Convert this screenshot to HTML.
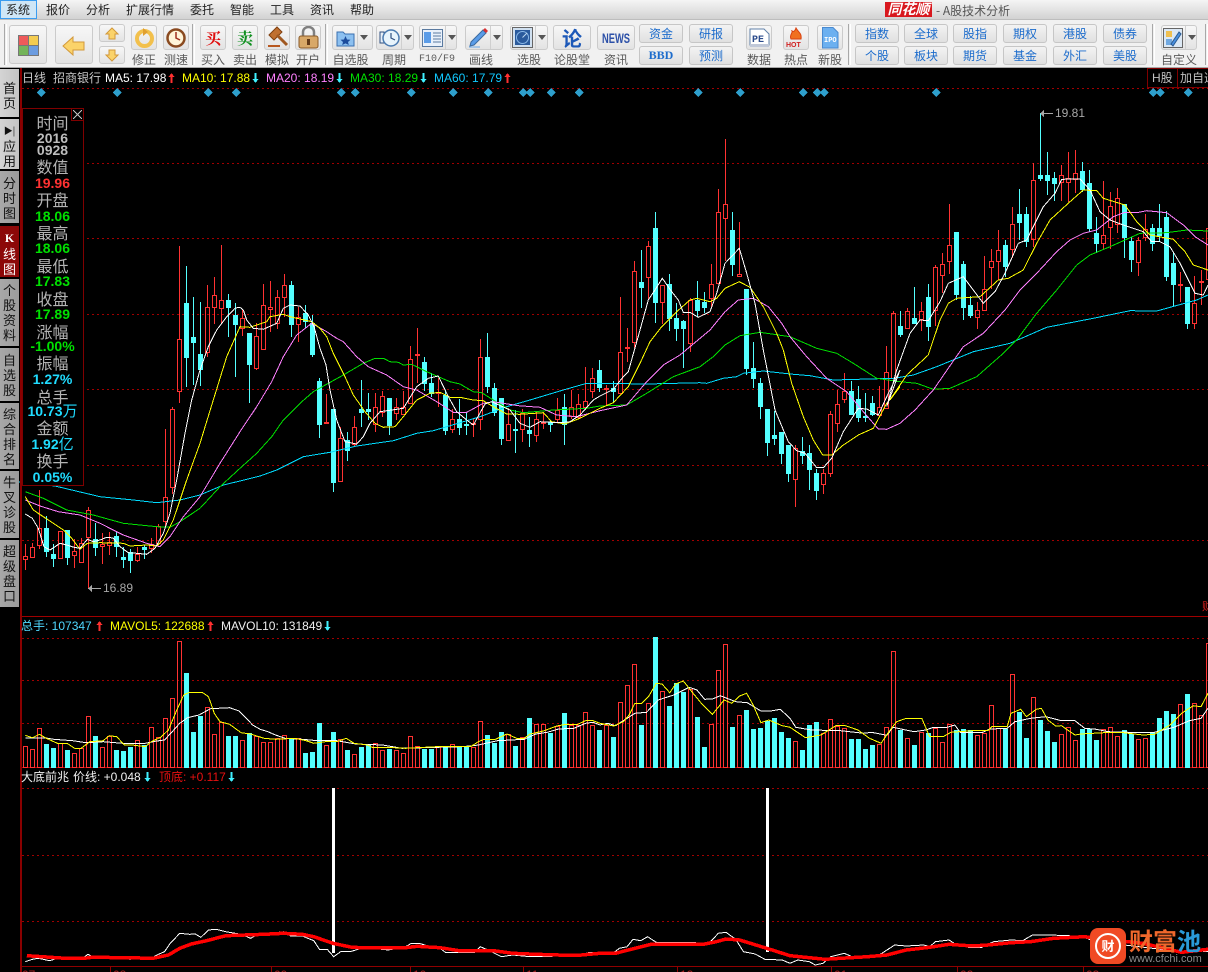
<!DOCTYPE html>
<html lang="zh-CN">
<head>
<meta charset="utf-8">
<title>A股技术分析</title>
<style>
html,body{margin:0;padding:0;background:#000}
#p{position:relative;width:1208px;height:972px;overflow:hidden;background:#000;font-family:"Liberation Sans","WenQuanYi Zen Hei","Noto Sans CJK SC",sans-serif;font-size:12px}
#p div,#p span{position:absolute;white-space:nowrap;box-sizing:border-box}
#p span span{position:static}
.menu{top:3px;color:#222;font-size:12px;line-height:14px;font-family:"WenQuanYi Zen Hei","Noto Sans CJK SC",sans-serif}
.b{border:1px solid #cbcbcb;border-radius:3px;background:linear-gradient(#f7f7f7,#e3e3e3)}
.g{height:19px;border:1px solid #c6c6c6;border-radius:3px;background:linear-gradient(#f3f3f3,#e0e0e0);color:#1c6ccc;text-align:center;line-height:17px;font-size:12px;font-family:"WenQuanYi Zen Hei","Noto Sans CJK SC",sans-serif}
.l{top:53px;color:#5a5a5a;font-size:12px;line-height:14px;font-family:"WenQuanYi Zen Hei","Noto Sans CJK SC",sans-serif;text-align:center}
.s{top:24px;width:3px;height:41px;border-left:1px solid #a8a8a8;border-right:1px solid #fff}
.tab{left:0;width:19px;background:linear-gradient(90deg,#a8a8a8,#9c9c9c);color:#111;font-size:13px;line-height:15px;text-align:center;font-family:"WenQuanYi Zen Hei","Noto Sans CJK SC",sans-serif;white-space:normal!important}
.lab{left:22px;width:61px;text-align:center;color:#b4b4b4;font-size:16px;line-height:16px;font-family:"WenQuanYi Zen Hei","Noto Sans CJK SC",sans-serif}
.val{left:22px;width:61px;text-align:center;font-weight:bold;font-size:14px;line-height:14px}
.t{font-size:12px;line-height:14px}
svg{position:absolute;display:block}
</style>
</head>
<body>
<div id="p">
<!-- menu bar -->
<div style="left:0;top:0;width:1208px;height:20px;background:linear-gradient(#f5f5f5,#d2d2d2);border-bottom:1px solid #bdbdbd"></div>
<div style="left:0;top:0;width:37px;height:19px;background:#cfe6f6;border:1px solid #3a9cf0"></div>
<div class="menu" style="left:6px">系统</div>
<div class="menu" style="left:46px">报价</div>
<div class="menu" style="left:86px">分析</div>
<div class="menu" style="left:126px">扩展行情</div>
<div class="menu" style="left:190px">委托</div>
<div class="menu" style="left:230px">智能</div>
<div class="menu" style="left:270px">工具</div>
<div class="menu" style="left:310px">资讯</div>
<div class="menu" style="left:350px">帮助</div>
<div style="left:885px;top:2px;width:47px;height:15px;background:#d8181e;color:#fff;font:italic bold 14px/15px 'Noto Sans CJK SC',sans-serif;text-align:center">同花顺</div>
<div class="t" style="left:936px;top:4px;color:#555;font-family:'WenQuanYi Zen Hei','Noto Sans CJK SC',sans-serif">- A股技术分析</div>

<!-- toolbar -->
<div style="left:0;top:20px;width:1208px;height:48px;background:#f1f1f1;border-bottom:1px solid #a8a8a8"></div>
<div class="s" style="left:4px"></div>
<div class="b" style="left:9px;top:25px;width:38px;height:39px"></div>
<svg style="left:18px;top:35px" width="22" height="22"><rect x="0" y="0" width="21" height="21" fill="#777"/><rect x="1" y="1" width="9" height="9" fill="#ee5a5a"/><rect x="11" y="1" width="9" height="9" fill="#f4cc50"/><rect x="1" y="11" width="9" height="9" fill="#74b45a"/><rect x="11" y="11" width="9" height="9" fill="#6c9ce0"/></svg>
<div class="b" style="left:55px;top:25px;width:38px;height:39px"></div>
<svg style="left:62px;top:36px" width="24" height="20"><path d="M1 10 L11 1 V6 H22 V14 H11 V19Z" fill="#fbd36a" stroke="#d2983a"/></svg>
<div class="b" style="left:99px;top:24px;width:26px;height:18px"></div>
<svg style="left:104px;top:27px" width="16" height="13"><path d="M8 1 L14 7 H11 V12 H5 V7 H2Z" fill="#fbd36a" stroke="#d2983a"/></svg>
<div class="b" style="left:99px;top:46px;width:26px;height:18px"></div>
<svg style="left:104px;top:49px" width="16" height="13"><path d="M8 12 L14 6 H11 V1 H5 V6 H2Z" fill="#fbd36a" stroke="#d2983a"/></svg>
<div class="b" style="left:131px;top:25px;width:26px;height:25px"></div>
<svg style="left:134px;top:28px" width="21" height="21"><circle cx="10.5" cy="10.5" r="7.5" fill="none" stroke="#f2c04c" stroke-width="4"/><path d="M9 0 L14 4 L9 8Z" fill="#e0a030"/></svg>
<div class="l" style="left:131px;width:26px">修正</div>
<div class="b" style="left:163px;top:25px;width:26px;height:25px"></div>
<svg style="left:166px;top:28px" width="20" height="20"><circle cx="10" cy="10" r="8.5" fill="#fff4d8" stroke="#8a4a20" stroke-width="2.5"/><path d="M10 4 V10 L14 12" fill="none" stroke="#a03020" stroke-width="1.5"/></svg>
<div class="l" style="left:163px;width:26px">测速</div>
<div class="s" style="left:192px"></div>

<div class="b" style="left:200px;top:25px;width:26px;height:25px;text-align:center;color:#e01010;font:16px/23px 'Noto Serif CJK SC',serif;font-weight:bold">买</div>
<div class="l" style="left:200px;width:26px">买入</div>
<div class="b" style="left:232px;top:25px;width:26px;height:25px;text-align:center;color:#109020;font:16px/23px 'Noto Serif CJK SC',serif;font-weight:bold">卖</div>
<div class="l" style="left:232px;width:26px">卖出</div>
<div class="b" style="left:264px;top:25px;width:26px;height:25px"></div>
<svg style="left:266px;top:26px" width="23" height="23"><path d="M3 9 L11 1 L16 6 L8 14Z" fill="#c07030" stroke="#804010"/><path d="M11 9 L21 19" stroke="#a05820" stroke-width="3"/><rect x="2" y="19" width="12" height="2" fill="#b85820"/></svg>
<div class="l" style="left:264px;width:26px">模拟</div>
<div class="b" style="left:295px;top:25px;width:26px;height:25px"></div>
<svg style="left:298px;top:26px" width="21" height="23"><path d="M5 11 V6 A5.5 5 0 0 1 16 6 V11" fill="none" stroke="#808080" stroke-width="2.5"/><rect x="1" y="10" width="19" height="12" rx="2" fill="#d8a868" stroke="#8a5a28"/><rect x="9" y="13" width="3" height="6" fill="#603818"/></svg>
<div class="l" style="left:295px;width:26px">开户</div>
<div class="s" style="left:325px"></div>

<div class="b" style="left:332px;top:25px;width:41px;height:25px"></div>
<div style="left:357px;top:26px;width:1px;height:23px;background:#cfcfcf"></div>
<svg style="left:336px;top:29px" width="19" height="18"><path d="M1 3 H7 L9 5 H18 V17 H1Z" fill="#8cc0f0" stroke="#3a70b0"/><path d="M9.5 7 L11 10.5 L14.5 10.7 L12 13 L12.8 16 L9.5 14.4 L6.2 16 L7 13 L4.5 10.7 L8 10.5Z" fill="#1c4c9c"/></svg>
<svg style="left:360px;top:35px" width="10" height="6"><path d="M0 0 H8 L4 5Z" fill="#555"/></svg>
<div class="l" style="left:332px;width:37px">自选股</div>
<div class="b" style="left:376px;top:25px;width:38px;height:25px"></div>
<div style="left:401px;top:26px;width:1px;height:23px;background:#cfcfcf"></div>
<svg style="left:379px;top:28px" width="21" height="20"><rect x="1" y="4" width="4" height="11" fill="#e8f0f8" stroke="#305080"/><circle cx="12" cy="10" r="8" fill="#e8f4fc" stroke="#4a7ab0" stroke-width="1.5"/><path d="M12 5 V10 L16 12" fill="none" stroke="#305080" stroke-width="1.2"/></svg>
<svg style="left:404px;top:35px" width="10" height="6"><path d="M0 0 H8 L4 5Z" fill="#555"/></svg>
<div class="l" style="left:379px;width:30px">周期</div>
<div class="b" style="left:419px;top:25px;width:38px;height:25px"></div>
<div style="left:445px;top:26px;width:1px;height:23px;background:#cfcfcf"></div>
<svg style="left:422px;top:29px" width="21" height="18"><rect x="0.5" y="0.5" width="20" height="17" fill="#e8f0fa" stroke="#5a7aa0"/><rect x="2" y="3" width="7" height="11" fill="#5a9ce8"/><path d="M11 4 H19 M11 7 H19 M11 10 H19 M11 13 H19" stroke="#5a7aa0"/></svg>
<svg style="left:448px;top:35px" width="10" height="6"><path d="M0 0 H8 L4 5Z" fill="#555"/></svg>
<div class="l" style="left:418px;width:38px;font:10px/14px 'Liberation Mono',monospace;top:53px">F10/F9</div>
<div class="b" style="left:465px;top:25px;width:38px;height:25px"></div>
<div style="left:490px;top:26px;width:1px;height:23px;background:#cfcfcf"></div>
<svg style="left:468px;top:27px" width="21" height="21"><path d="M3 15 L15 3 L18 6 L6 18 L2 19Z" fill="#5a9ce8" stroke="#3a6aa0"/><path d="M15 3 L17 1 L20 4 L18 6Z" fill="#d83030"/><path d="M1 20 H12" stroke="#6aa8e8"/></svg>
<svg style="left:493px;top:35px" width="10" height="6"><path d="M0 0 H8 L4 5Z" fill="#555"/></svg>
<div class="l" style="left:465px;width:32px">画线</div>
<div class="b" style="left:510px;top:25px;width:38px;height:25px"></div>
<div style="left:535px;top:26px;width:1px;height:23px;background:#cfcfcf"></div>
<svg style="left:512px;top:27px" width="21" height="21"><rect x="0.5" y="0.5" width="20" height="20" fill="#d0e0f0" stroke="#666"/><rect x="3" y="3" width="15" height="15" fill="#2a5a9c"/><circle cx="10.5" cy="10.5" r="6" fill="none" stroke="#8ab8e8"/><path d="M10.5 10.5 L15 6" stroke="#bcd8f0"/></svg>
<svg style="left:538px;top:35px" width="10" height="6"><path d="M0 0 H8 L4 5Z" fill="#555"/></svg>
<div class="l" style="left:510px;width:38px">选股</div>
<div class="b" style="left:553px;top:25px;width:38px;height:25px;text-align:center;color:#1c58b8;font:bold 20px/23px 'Noto Sans CJK SC',sans-serif">论</div>
<div class="l" style="left:553px;width:38px">论股堂</div>
<div class="b" style="left:597px;top:25px;width:38px;height:25px"></div>
<svg style="left:602px;top:31px" width="29" height="14"><text x="0" y="12" font-family="Liberation Sans" font-weight="bold" font-size="14" fill="#2c50a8" textLength="28" lengthAdjust="spacingAndGlyphs">NEWS</text></svg>
<div class="l" style="left:597px;width:38px">资讯</div>
<div class="g" style="left:639px;top:24px;width:44px">资金</div>
<div class="g" style="left:639px;top:46px;width:44px;font:bold 12px/17px 'Liberation Serif',serif">BBD</div>
<div class="g" style="left:689px;top:24px;width:44px">研报</div>
<div class="g" style="left:689px;top:46px;width:44px">预测</div>
<div class="b" style="left:746px;top:25px;width:26px;height:25px"></div>
<svg style="left:749px;top:28px" width="21" height="20"><path d="M1 1 H15 L20 6 V17 H1Z" fill="#fff" stroke="#6080a8"/><rect x="1" y="16" width="19" height="3" fill="#c0c8d8"/><text x="3" y="14" font-family="Liberation Mono" font-weight="bold" font-size="10" fill="#2c4c8c">PE</text></svg>
<div class="l" style="left:746px;width:26px">数据</div>
<div class="b" style="left:783px;top:25px;width:26px;height:25px"></div>
<svg style="left:786px;top:27px" width="20" height="21"><path d="M10 1 C12 5 16 6 15 12 H5 C3 8 7 6 6 4 C8 5 9 4 10 1Z" fill="#f07020" stroke="#d84010"/><text x="0" y="20" font-family="Liberation Sans" font-weight="bold" font-size="7" fill="#d02020">HOT</text></svg>
<div class="l" style="left:783px;width:26px">热点</div>
<div class="b" style="left:817px;top:25px;width:26px;height:25px"></div>
<svg style="left:822px;top:27px" width="17" height="22"><path d="M0.5 0.5 H11 L16 5.5 V21 H0.5Z" fill="#6cb0f0" stroke="#4a8ad0"/><text x="2" y="15" font-family="Liberation Mono" font-weight="bold" font-size="7" fill="#fff">IPO</text></svg>
<div class="l" style="left:817px;width:26px">新股</div>
<div class="s" style="left:848px"></div>
<div class="g" style="left:855px;top:24px;width:44px">指数</div>
<div class="g" style="left:855px;top:46px;width:44px">个股</div>
<div class="g" style="left:904px;top:24px;width:44px">全球</div>
<div class="g" style="left:904px;top:46px;width:44px">板块</div>
<div class="g" style="left:953px;top:24px;width:44px">股指</div>
<div class="g" style="left:953px;top:46px;width:44px">期货</div>
<div class="g" style="left:1003px;top:24px;width:44px">期权</div>
<div class="g" style="left:1003px;top:46px;width:44px">基金</div>
<div class="g" style="left:1053px;top:24px;width:44px">港股</div>
<div class="g" style="left:1053px;top:46px;width:44px">外汇</div>
<div class="g" style="left:1103px;top:24px;width:44px">债券</div>
<div class="g" style="left:1103px;top:46px;width:44px">美股</div>
<div class="s" style="left:1152px"></div>
<div class="b" style="left:1161px;top:25px;width:36px;height:25px"></div>
<div style="left:1185px;top:26px;width:1px;height:23px;background:#cfcfcf"></div>
<svg style="left:1163px;top:28px" width="20" height="20"><rect x="0.5" y="0.5" width="19" height="19" fill="#dce8f4" stroke="#666"/><rect x="3" y="3" width="6" height="6" fill="#f0c050"/><rect x="3" y="11" width="6" height="6" fill="#70a8e0"/><path d="M8 16 L16 4 L18 6 L10 18Z" fill="#4a90e0" stroke="#2a5a90"/></svg>
<svg style="left:1188px;top:35px" width="10" height="6"><path d="M0 0 H8 L4 5Z" fill="#555"/></svg>
<div class="l" style="left:1161px;width:36px">自定义</div>
<div class="s" style="left:1205px"></div>

<!-- chart svg -->
<svg id="c" style="left:0;top:0" width="1208" height="972" shape-rendering="crispEdges"></svg>

<!-- side tabs -->
<div style="left:20px;top:68px;width:2px;height:904px;background:#8a0000"></div>
<div class="tab" style="top:69px;height:48px;padding-top:11px;background:linear-gradient(90deg,#d4d4d4,#c4c4c4)">首<br>页</div>
<div class="tab" style="top:119px;height:50px;padding-top:2px;background:linear-gradient(90deg,#d4d4d4,#c4c4c4)"><span style="font-size:9px;position:static">▶|</span><br>应<br>用</div>
<div class="tab" style="top:171px;height:52px;padding-top:4px">分<br>时<br>图</div>
<div class="tab" style="top:226px;height:51px;padding-top:3px;background:#8c0808;color:#fff"><span style="position:static;font:bold 12px 'Liberation Serif',serif">K</span><br>线<br>图</div>
<div class="tab" style="top:279px;height:67px;padding-top:3px">个<br>股<br>资<br>料</div>
<div class="tab" style="top:348px;height:53px;padding-top:4px">自<br>选<br>股</div>
<div class="tab" style="top:403px;height:66px;padding-top:3px">综<br>合<br>排<br>名</div>
<div class="tab" style="top:471px;height:67px;padding-top:3px">牛<br>叉<br>诊<br>股</div>
<div class="tab" style="top:540px;height:67px;padding-top:3px">超<br>级<br>盘<br>口</div>

<!-- header row -->
<div class="t" style="left:22px;top:71px;color:#c8c8c8">日线</div>
<div class="t" style="left:53px;top:71px;color:#c8c8c8">招商银行</div>
<div class="t" style="left:105px;top:71px;color:#fff">MA5: 17.98</div>
<div class="t" style="left:182px;top:71px;color:#ffff00">MA10: 17.88</div>
<div class="t" style="left:266px;top:71px;color:#ff80ff">MA20: 18.19</div>
<div class="t" style="left:350px;top:71px;color:#00e000">MA30: 18.29</div>
<div class="t" style="left:434px;top:71px;color:#10c8ff">MA60: 17.79</div>
<div style="left:1147px;top:68px;width:31px;height:20px;border:1px solid #800000;background:#000;color:#c0c0c0;line-height:18px;padding-left:4px">H股</div>
<div style="left:1177px;top:68px;width:31px;height:20px;border:1px solid #800000;border-right:0;background:#000;color:#c0c0c0;line-height:18px;padding-left:2px;overflow:hidden">加自选</div>

<!-- info panel -->
<div style="left:22px;top:108px;width:62px;height:378px;background:#000;border:1px solid #800000"></div>
<div style="left:71px;top:108px;width:13px;height:13px;border:1px solid #800000;background:#000"></div>
<svg style="left:73px;top:110px" width="9" height="9" shape-rendering="crispEdges"><path d="M0 0 L9 9 M9 0 L0 9" stroke="#c0c0c0"/></svg>
<div class="lab" style="top:114px">时间</div>
<div class="val" style="top:131px;color:#bdbdbd">2016</div>
<div class="val" style="top:143px;color:#bdbdbd">0928</div>
<div class="lab" style="top:158px">数值</div>
<div class="val" style="top:176px;color:#ff3232">19.96</div>
<div class="lab" style="top:191px">开盘</div>
<div class="val" style="top:209px;color:#00e000">18.06</div>
<div class="lab" style="top:224px">最高</div>
<div class="val" style="top:241px;color:#00e000">18.06</div>
<div class="lab" style="top:257px">最低</div>
<div class="val" style="top:274px;color:#00e000">17.83</div>
<div class="lab" style="top:290px">收盘</div>
<div class="val" style="top:307px;color:#00e000">17.89</div>
<div class="lab" style="top:323px">涨幅</div>
<div class="val" style="top:339px;color:#00e000">-1.00%</div>
<div class="lab" style="top:354px">振幅</div>
<div class="val" style="top:372px;color:#20dcff">1.27%</div>
<div class="lab" style="top:388px">总手</div>
<div class="val" style="top:404px;color:#20dcff">10.73<span style="position:static;font-weight:normal;font-size:15px">万</span></div>
<div class="lab" style="top:419px">金额</div>
<div class="val" style="top:437px;color:#20dcff">1.92<span style="position:static;font-weight:normal;font-size:15px">亿</span></div>
<div class="lab" style="top:452px">换手</div>
<div class="val" style="top:470px;color:#20dcff">0.05%</div>

<!-- price annotations -->
<div class="t" style="left:1055px;top:106px;color:#a8a8a8">19.81</div>
<div class="t" style="left:103px;top:581px;color:#a8a8a8">16.89</div>
<div style="left:1202px;top:600px;width:6px;height:15px;overflow:hidden;color:#e02020;font-size:11px;line-height:15px">财</div>

<!-- indicator labels -->
<div class="t" style="left:21px;top:619px;color:#50d8ff">总手: 107347</div>
<div class="t" style="left:110px;top:619px;color:#ffff00">MAVOL5: 122688</div>
<div class="t" style="left:221px;top:619px;color:#f0f0f0">MAVOL10: 131849</div>
<div class="t" style="left:21px;top:770px;color:#f0f0f0">大底前兆</div>
<div class="t" style="left:73px;top:770px;color:#f0f0f0">价线: +0.048</div>
<div class="t" style="left:159px;top:770px;color:#e81010">顶底: +0.117</div>

<!-- axis labels -->
<div style="left:22px;top:968px;color:#a82020;font-size:12px;line-height:14px">07</div>
<div style="left:113px;top:968px;color:#a82020;font-size:12px;line-height:14px">08</div>
<div style="left:274px;top:968px;color:#a82020;font-size:12px;line-height:14px">09</div>
<div style="left:413px;top:968px;color:#a82020;font-size:12px;line-height:14px">10</div>
<div style="left:526px;top:968px;color:#a82020;font-size:12px;line-height:14px">11</div>
<div style="left:680px;top:968px;color:#a82020;font-size:12px;line-height:14px">12</div>
<div style="left:834px;top:968px;color:#a82020;font-size:12px;line-height:14px">01</div>
<div style="left:960px;top:968px;color:#a82020;font-size:12px;line-height:14px">02</div>
<div style="left:1086px;top:968px;color:#a82020;font-size:12px;line-height:14px">03</div>

<!-- watermark -->
<div style="left:1090px;top:928px;width:36px;height:36px;border-radius:8px;background:#f04a24"></div>
<div style="left:1095px;top:933px;width:26px;height:26px;border-radius:50%;border:2px solid #fff;color:#fff;text-align:center;font:bold 13px/21px 'Noto Sans CJK SC',sans-serif">财</div>
<div style="left:1129px;top:925px;font:bold 24px/30px 'Noto Sans CJK SC',sans-serif;color:#f0682c;letter-spacing:0">财富<span style="position:static;color:#2a9ad8">池</span></div>
<div style="left:1129px;top:953px;color:#8a8a8a;font-size:11px;line-height:12px">www.cfchi.com</div>
</div>
<script>
var c=[[1,544,556,559,570],[1,543,547,557,557],[1,490,528,545,549],[0,516,528,551,557],[0,544,554,558,567],[1,531,531,558,558],[0,530,530,557,565],[1,539,551,555,568],[1,538,543,562,562],[1,507,510,537,588],[0,523,539,547,556],[1,533,544,546,564],[1,532,542,545,555],[0,531,536,546,557],[0,547,557,559,568],[0,549,552,560,573],[1,547,554,560,562],[0,545,547,549,559],[1,538,544,548,553],[1,524,526,543,543],[1,429,497,521,527],[1,407,409,487,494],[1,246,339,391,403],[0,266,303,357,387],[0,297,337,342,385],[0,302,354,369,386],[1,285,307,352,357],[1,277,295,307,324],[1,245,300,308,324],[0,294,300,307,337],[0,303,315,324,377],[1,310,318,328,336],[0,333,333,364,403],[1,323,336,368,370],[1,284,305,349,349],[1,281,307,309,332],[1,290,297,323,329],[1,274,285,297,317],[0,281,285,324,337],[1,307,317,324,342],[0,305,313,321,328],[0,315,323,354,357],[0,378,381,424,438],[1,394,422,423,423],[0,409,409,482,492],[1,427,438,481,481],[0,432,440,450,461],[1,416,427,444,447],[0,380,409,412,427],[0,393,409,411,420],[1,393,407,424,432],[1,391,396,412,417],[0,398,398,425,435],[1,398,407,413,420],[1,391,407,414,414],[1,346,359,403,403],[1,328,354,355,383],[0,357,362,383,391],[0,373,383,393,397],[1,378,392,393,407],[0,390,395,430,435],[1,409,419,429,433],[0,399,419,427,435],[0,412,424,425,435],[1,418,423,424,437],[1,339,357,419,430],[0,333,357,386,393],[0,383,388,412,416],[0,398,398,438,445],[1,408,424,440,440],[0,410,429,430,453],[1,409,413,429,442],[0,417,430,433,447],[1,412,419,435,442],[1,412,422,423,429],[0,420,422,424,432],[1,398,410,419,423],[0,394,407,424,445],[1,390,407,416,419],[1,394,404,417,419],[1,367,401,407,410],[1,368,378,391,398],[0,360,370,387,392],[1,385,388,389,406],[0,381,388,391,402],[1,297,352,393,393],[1,328,347,348,362],[1,261,271,342,348],[0,250,282,287,308],[1,241,246,277,300],[0,212,228,302,323],[1,285,285,302,324],[0,274,284,318,331],[0,303,318,328,341],[0,320,321,328,368],[1,298,300,343,352],[0,281,300,310,317],[0,292,302,307,313],[1,264,284,298,307],[1,189,212,283,283],[1,139,204,218,261],[0,212,230,264,276],[1,222,274,276,276],[0,289,289,368,375],[0,342,368,378,388],[0,378,383,406,419],[0,409,409,442,456],[0,411,435,438,445],[0,432,432,453,464],[0,445,445,473,482],[1,445,448,479,507],[0,437,451,455,464],[0,445,453,469,490],[0,469,473,490,500],[1,469,473,484,494],[1,411,414,473,477],[1,390,404,423,432],[1,373,391,399,403],[0,381,391,414,414],[0,386,399,417,422],[0,393,416,417,422],[0,396,403,414,416],[1,386,407,415,416],[1,346,372,408,408],[1,311,313,378,378],[0,311,326,334,337],[1,308,311,328,328],[0,287,318,323,323],[1,302,311,319,331],[0,284,297,326,341],[1,265,267,310,326],[1,253,264,275,293],[1,204,245,261,274],[0,232,232,294,300],[0,261,264,307,320],[0,296,305,315,318],[1,302,310,317,329],[1,256,289,310,310],[1,249,261,267,289],[1,230,250,261,280],[0,240,245,266,277],[1,207,224,249,258],[0,189,214,222,240],[0,207,214,241,247],[1,163,180,239,247],[0,113,175,178,181],[0,152,175,180,195],[0,172,178,183,201],[1,165,175,182,201],[1,152,178,182,202],[1,150,173,179,193],[0,162,171,189,192],[0,170,183,228,232],[0,217,233,243,253],[1,181,235,243,250],[1,192,206,227,249],[1,188,198,224,233],[0,204,204,237,258],[0,237,241,259,272],[1,237,240,262,276],[1,214,229,237,241],[0,224,228,243,251],[0,204,228,235,241],[0,211,217,276,281],[0,253,263,284,307],[1,272,284,285,302],[0,287,287,323,329],[1,276,303,323,329],[1,270,281,282,305],[1,228,228,279,279]];
var v=[408,418,355,402,414,400,420,430,415,318,378,412,378,420,423,410,390,405,352,382,325,265,94,189,366,318,290,373,335,378,378,390,370,378,397,397,385,376,385,385,430,426,339,405,366,388,420,432,410,402,400,420,417,420,430,378,408,417,417,408,412,402,412,408,410,333,375,400,366,372,408,382,324,342,342,370,348,309,345,345,306,345,360,345,381,277,226,163,345,280,81,244,288,219,246,237,321,411,343,181,103,351,316,300,357,354,333,324,366,384,394,420,345,336,370,328,348,354,387,387,417,405,403,352,124,360,385,405,367,370,353,397,343,360,358,360,376,368,286,354,357,193,306,384,262,330,363,396,373,352,390,357,358,390,358,352,378,360,372,388,385,366,324,303,312,283,252,280,316,100];
function P(ox,sx,oy,sy,s){return s.trim().split(/\s+/).map(function(p){var a=p.split(',');return (ox+a[0]/sx).toFixed(1)+','+(oy+a[1]/sy).toFixed(1)}).join(' ')}
function L(pts,col,w,o){return '<polyline fill="none" stroke="'+col+'" stroke-width="'+(w||1)+'" points="'+pts+'"'+(o||'')+'/>'}
var Z4=function(s){return P(0,3,100,3,s)},Z5=function(s){return P(0,3,400,3,s)},Z6=function(s){return P(240,3,220,3,s)},Z7=function(s){return P(600,3,130,3,s)},Z8=function(s){return P(880,3,100,3,s)};
var h='';
// dotted grid
[88,163,238,314,389,465,540,638,680,723,788,855,921].forEach(function(y){h+='<path d="M22 '+(y+.5)+'H1208" stroke="#a00000" stroke-dasharray="2 3"/>'});
// panel lines
h+='<rect x="21" y="616" width="1187" height="1" fill="#a00000"/><rect x="21" y="767" width="1187" height="1" fill="#b00000"/><rect x="21" y="966" width="1187" height="1" fill="#900000"/>';
[21,110,271,410,523,677,831,957,1083].forEach(function(x){h+='<rect x="'+x+'" y="966" width="1" height="6" fill="#900000"/>'});
// diamonds
[41,117,208,236,341,355,411,453,488,523,530,551,579,698,740,803,817,824,936,1153,1160,1188].forEach(function(x){h+='<path d="M'+x+' 88L'+(x+4.5)+' 92.5L'+x+' 97L'+(x-4.5)+' 92.5Z" fill="#2e9fcc"/>'});
// candles + volume
var rw='',rb='',cw='',cb='',vr='',vc='';
c.forEach(function(d,i){var x=25+7*i;var t=d[2],b=d[3];
 if(b-t<1)b=t+1;
 if(d[0]){rw+='M'+(x+.5)+' '+d[1]+'V'+t+'M'+(x+.5)+' '+b+'V'+d[4];rb+='M'+(x-1.5)+' '+(t+.5)+'h4v'+(b-t)+'h-4z'}
 else{cw+='M'+(x+.5)+' '+d[1]+'V'+d[4];cb+='M'+(x-2)+' '+t+'h5v'+(b-t+1)+'h-5z'}
 var y=Math.round(610+v[i]/3);
 if(d[0])vr+='M'+(x-1.5)+' '+(y+.5)+'h4v'+(767-y)+'h-4z';else vc+='M'+(x-2)+' '+y+'h5v'+(768-y)+'h-5z';
});
h+='<path d="'+rw+rb+vr+'" fill="none" stroke="#ff3232"/><path d="'+cw+'" fill="none" stroke="#54ffff"/><path d="'+cb+vc+'" fill="#54ffff"/>';
// MA60
h+=L(Z5('0,240 165,258 300,290 400,300 470,308 540,300 600,285 670,255 720,243')+' '+Z6('60,768 110,750 190,710 270,697 350,678 460,662 530,640 580,632 620,620 720,590 800,560 870,540 970,510 1040,490 1080,490')+' '+Z7('140,762 300,758 320,760 370,745 410,740 430,730 490,723 570,732 630,737 700,750 880,745 900,742')+' '+Z8('100,825 170,800 280,755 390,730 500,682 640,655 750,632 830,633 950,600 984,585'),'#00dcff');
// MA30
h+=L(Z5('76,275 130,295 200,330 280,345 370,370 470,380 510,382 540,365 600,325 660,260 720,205')+' '+Z6('50,700 95,650 130,600 180,550 220,515 310,465 370,430 405,415 430,415 450,425 475,427 490,435 515,433 560,455 630,485 660,492 700,515 725,518 760,540 810,570 850,578 940,570 1040,565 1080,558')+' '+Z7('80,825 140,790 220,740 300,710 340,680 375,645 420,617 480,607 570,620 650,655 710,670 760,700 830,745 900,755')+' '+Z8('40,843 110,850 160,868 210,865 290,830 370,760 410,720 470,640 530,570 590,495 630,465 690,440 780,400 860,398 920,390 984,393'),'#00e000');
// MA20
h+=L(Z5('76,300 120,318 175,335 240,345 300,370 370,405 440,430 480,440 510,410 550,350 600,290 660,190 720,95')+' '+Z6('50,560 95,485 130,410 170,345 215,310 260,335 290,355 310,365 350,410 385,440 440,465 490,500 530,510 590,545 640,577 680,577 730,550 760,545 835,557 900,562 950,585 1010,590 1080,572')+' '+Z7('80,825 140,755 190,705 240,675 330,600 375,545 415,510 460,505 505,530 545,580 570,620 620,680 680,745 740,785 790,845 835,897 860,898 900,880')+' '+Z8('105,930 160,870 215,790 250,740 310,700 375,630 420,570 470,520 530,455 570,420 610,400 650,390 700,350 735,337 770,338 800,332 860,338 910,375 945,410 984,435'),'#ff80ff');
// MA10
h+=L(Z5('76,290 100,330 130,350 160,370 190,390 215,415 240,448 262,430 300,428 370,430 390,438 440,435 470,438 490,420 520,360 560,240 600,130 640,0')+' '+Z4('680,770 720,680')+' '+Z6('30,322 80,305 90,290 130,283 150,290 215,305 240,325 260,350 280,400 315,470 340,525 375,575 405,610 430,622 465,620 490,590 530,540 570,520 600,517 630,532 660,532 700,540 730,542 760,560 800,582 840,583 910,578 935,605 975,612 1020,595 1080,565')+' '+Z7('40,818 85,770 120,700 150,635 185,590 230,545 270,510 290,505 330,515 350,505 375,475 418,455 450,472 490,530 530,610 550,660 575,760 610,860 640,930 668,975 695,975 730,945 775,915 820,895 860,820 900,770')+' '+Z8('30,900 80,825 145,765 180,660 205,610 230,595 300,590 355,540 385,535 430,510 470,430 510,360 570,305 610,270 650,272 670,295 735,315 770,365 810,405 880,418 915,455 940,495 984,510'),'#ffff00');
// MA5
h+=L(Z5('76,342 97,355 115,385 132,440 150,450 165,440 180,430 200,435 222,442 240,445 262,418 280,425 300,420 320,412 340,414 360,440 385,458 410,460 440,463 465,445 490,400 510,340 530,240 555,100 575,0')+' '+Z4('600,810 625,740 650,690 680,650 706,624 720,622')+' '+Z6('10,270 20,300 40,325 70,328 110,310 130,265 150,255 180,258 205,285 222,320 240,385 258,435 270,510 290,600 315,665 350,672 370,650 390,610 420,575 490,565 530,500 565,475 595,468 625,530 650,575 680,600 700,615 735,552 755,545 810,570 840,610 870,622 900,605 960,608 990,605 1020,585 1060,540 1080,528')+' '+Z7('40,778 70,740 85,725 120,600 145,510 165,480 187,445 215,485 235,510 250,547 270,547 295,562 330,545 350,490 375,400 418,355 440,430 465,520 490,660 525,840 565,935 590,962 615,970 650,1013 670,1013 695,985 730,905 775,835 800,837 835,855 865,790 900,720')+' '+Z8('20,920 50,810 90,700 120,660 145,662 180,605 205,550 250,530 310,610 345,575 375,520 415,430 440,420 490,320 525,280 545,238 600,237 630,270 660,335 690,360 730,375 790,395 815,425 840,425 870,440 900,490 945,580 970,585 984,555'),'#ffffff');
// vol MAs
var a=2.6133,b=2.5789;
h+=L(P(0,a,610,3,'66,384 120,384 140,388 190,392 225,398 270,395 320,400 380,400 410,393 430,390 450,365 470,340 490,323 520,315 550,296 600,293 625,303 640,320 660,345 680,358 700,365 720,375 745,385 790,388 830,392 880,392 930,402 1000,405 1050,415 1200,410 1230,408 1250,405 1300,392 1370,388 1400,372 1430,367 1460,357 1500,355 1530,340 1550,337 1568,345')+' '+P(600,b,610,3,'20,340 40,347 90,310 120,307 150,270 190,255 230,232 250,240 270,268 290,267 310,257 350,275 380,278 415,303 440,303 465,298 490,325 505,352 545,360 620,362 680,370 700,367 740,376 755,352 810,365 840,360 860,352 895,352 915,345 930,368 985,368 1005,357 1050,355 1070,335 1110,325 1150,320 1190,332 1225,332 1250,355 1280,358 1310,365 1400,368 1430,367 1480,352 1520,332 1550,325 1568,295'),'#ffffff');
h+=L(P(0,a,610,3,'66,376 85,383 103,373 121,385 150,400 175,400 195,415 212,415 235,395 270,392 285,377 305,380 325,405 345,405 380,410 395,395 420,382 440,360 462,300 480,255 495,247 530,248 545,260 560,310 575,335 600,343 630,368 655,372 690,385 720,388 770,385 800,392 820,400 850,395 880,395 905,385 925,400 960,405 975,413 1010,412 1060,415 1140,410 1230,410 1250,395 1265,388 1295,388 1325,372 1350,385 1370,385 1385,372 1420,363 1455,348 1480,343 1510,343 1530,332 1550,332 1568,340')+' '+P(600,b,610,3,'35,348 60,335 75,315 90,280 108,280 125,260 145,220 160,222 180,248 195,222 215,213 240,250 265,285 290,313 320,270 340,280 360,258 378,250 395,285 415,338 435,330 470,347 490,352 530,383 570,375 610,346 630,346 665,360 695,385 725,400 745,365 765,335 790,325 830,325 850,380 885,380 905,367 960,362 1000,362 1010,350 1050,350 1060,310 1085,298 1100,320 1125,298 1138,295 1155,330 1175,348 1190,347 1225,375 1240,372 1300,368 1350,368 1400,375 1430,373 1470,345 1500,310 1530,287 1550,290 1568,250'),'#ffff00');
// spikes
h+='<rect x="332" y="788" width="3" height="165" fill="#fff"/><rect x="766" y="788" width="3" height="164" fill="#fff"/>';
// bottom panel
h+=L(P(0,a,900,3,'66,185 85,178 100,175 130,182 150,175 215,175 230,163 245,172 320,175 340,178 400,172 410,165 430,155 445,130 470,100 495,103 510,102 525,112 545,90 565,88 590,95 630,103 655,115 680,100 720,98 740,95 760,108 790,108 820,122 835,148 855,148 872,170 890,155 915,155 945,145 970,145 1015,150 1060,140 1075,130 1095,130 1125,140 1150,145 1165,158 1190,158 1240,158 1255,140 1275,150 1310,170 1340,165 1385,170 1440,170 1465,162 1510,168 1540,157 1568,157')+' '+P(600,b,900,3,'35,158 50,145 70,140 85,118 105,122 123,110 145,127 170,127 230,127 270,130 285,125 305,100 325,97 350,118 370,155 400,162 425,178 470,180 490,190 510,180 540,185 555,195 575,190 595,170 630,160 650,170 720,165 760,135 790,138 835,135 850,140 865,125 900,120 920,135 950,142 985,142 1015,125 1060,120 1090,122 1115,105 1160,105 1230,108 1255,115 1280,125 1500,155 1520,150 1568,155'),'#ffffff');
h+=L(P(0,a,900,3,'70,167 110,170 170,175 220,175 240,172 330,173 400,175 440,165 470,145 500,132 540,122 590,107 640,105 690,103 740,100 790,103 820,110 870,130 920,142 970,144 1010,143 1060,143 1090,139 1150,143 1200,152 1240,153 1290,152 1340,160 1400,163 1460,165 1520,165 1568,160')+' '+P(600,b,900,3,'40,160 90,145 135,132 190,132 270,132 300,125 325,117 360,120 430,145 490,167 580,178 620,175 690,170 740,165 790,150 850,142 900,133 960,138 1000,135 1060,128 1110,125 1170,115 1250,110 1300,118 1400,130 1500,157 1568,148'),'#ff0000',3.5);
// arrows
function Ar(x,y,up,col){var s=up?-1:1;return '<path d="M'+(x+.5)+' '+(y+5*s)+'L'+(x+3.5)+' '+(y+s)+'H'+(x+1.5)+'V'+(y-5*s)+'H'+(x-.5)+'V'+(y+s)+'H'+(x-2.5)+'Z" fill="'+col+'"/>'}
var R='#ff3030',C='#40f0ff';
h+=Ar(171,78,1,R)+Ar(255,78,0,C)+Ar(339,78,0,C)+Ar(423,78,0,C)+Ar(507,78,1,R)+Ar(99,626,1,R)+Ar(210,626,1,R)+Ar(327,626,0,C)+Ar(147,777,0,C)+Ar(231,777,0,C);
// price pointers
h+='<path d="M1041 113.5H1053M88 588.5H101" stroke="#a8a8a8"/><path d="M1040 113.5L1044 110V117ZM88 588.5L92 585V592Z" fill="#a8a8a8"/>';
document.getElementById('c').innerHTML=h;
</script>
</body>
</html>
